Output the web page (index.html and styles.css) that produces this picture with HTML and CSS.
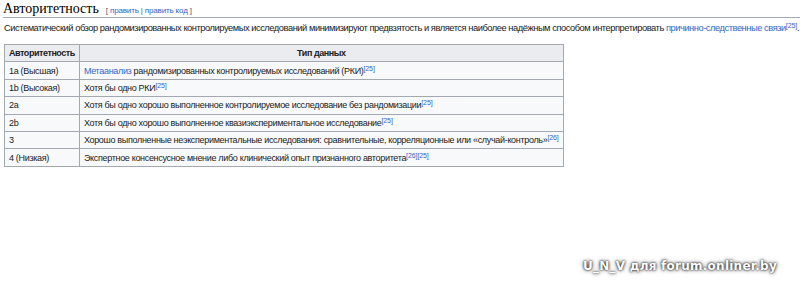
FILE: index.html
```html
<!DOCTYPE html>
<html lang="ru">
<head>
<meta charset="utf-8">
<link rel="stylesheet" href="styles.css">
</head>
<body>
<div class="page">
  <h2 class="heading"><span class="headline">Авторитетность</span><span class="edit"><span class="br">[</span> <a href="#">править</a> <span class="sep">|</span> <a href="#">править код</a> <span class="br">]</span></span></h2>
  <p class="para">Систематический обзор рандомизированных контролируемых исследований минимизируют предвзятость и является наиболее надёжным способом интерпретировать <a href="#">причинно-следственные связи</a><sup><a href="#">[25]</a></sup>.</p>
  <table class="wikitable">
    <thead>
      <tr><th class="c1">Авторитетность</th><th>Тип данных</th></tr>
    </thead>
    <tbody>
      <tr><td>1a (Высшая)</td><td><a href="#">Метаанализ</a> рандомизированных контролируемых исследований (РКИ)<sup><a href="#">[25]</a></sup></td></tr>
      <tr><td>1b (Высокая)</td><td>Хотя бы одно РКИ<sup><a href="#">[25]</a></sup></td></tr>
      <tr><td>2a</td><td>Хотя бы одно хорошо выполненное контролируемое исследование без рандомизации<sup><a href="#">[25]</a></sup></td></tr>
      <tr><td>2b</td><td>Хотя бы одно хорошо выполненное квазиэкспериментальное исследование<sup><a href="#">[25]</a></sup></td></tr>
      <tr><td>3</td><td>Хорошо выполненные неэкспериментальные исследования: сравнительные, корреляционные или «случай-контроль»<sup><a href="#">[26]</a></sup></td></tr>
      <tr><td>4 (Низкая)</td><td>Экспертное консенсусное мнение либо клинический опыт признанного авторитета<sup><a href="#">[26]</a><a href="#">[25]</a></sup></td></tr>
    </tbody>
  </table>
  <span class="watermark">U_N_V для forum.onliner.by</span>
</div>
</body>
</html>
```
FILE: styles.css
```css
html, body {
  margin: 0;
  padding: 0;
  background: #ffffff;
}
body {
  font-family: "Liberation Sans", Arial, sans-serif;
  color: #202122;
  width: 800px;
  height: 290px;
  overflow: hidden;
}
.page {
  position: relative;
  height: 290px;
  padding: 0 0 0 4px;
  box-sizing: border-box;
}
a {
  color: #3366cc;
  text-decoration: none;
}
.heading {
  margin: 0 0 0 -1px;
  padding: 1px 0 0 0;
  height: 16px;
  border-bottom: 1px solid #a2a9b1;
  font-weight: normal;
  font-family: "Liberation Serif", "Times New Roman", serif;
  font-size: 14px;
  line-height: 16px;
  display: flex;
  align-items: baseline;
  color: #000;
}
.edit {
  font-family: "Liberation Sans", Arial, sans-serif;
  font-size: 8px;
  letter-spacing: -0.15px;
  margin-left: 7px;
  color: #54595d;
}
.para {
  margin: 3px 0 0 0;
  font-size: 9.3px;
  letter-spacing: -0.45px;
  line-height: 14px;
  white-space: nowrap;
}
sup {
  font-size: 7px;
  line-height: 0;
  letter-spacing: -0.1px;
  vertical-align: 3px;
}
.wikitable {
  margin-top: 9px;
  border-collapse: collapse;
  background: #f8f9fa;
  border: 1px solid #a2a9b1;
  width: 558px;
  font-size: 9px;
  letter-spacing: -0.32px;
}
.wikitable th, .wikitable td {
  border: 1px solid #a2a9b1;
  padding: 0 4px;
  height: 16.4px;
  text-align: left;
  vertical-align: middle;
  white-space: nowrap;
}
.wikitable th {
  background: #eaecf0;
  text-align: center;
  font-weight: bold;
  letter-spacing: -0.45px;
}
.wikitable th.c1 {
  width: 66px;
  text-align: left;
}
.watermark {
  position: absolute;
  left: 583px;
  top: 259px;
  font-family: "DejaVu Sans", Verdana, sans-serif;
  font-weight: bold;
  font-size: 12px;
  letter-spacing: 0.25px;
  line-height: 14px;
  color: #ffffff;
  text-shadow: 0 0 2px #000, 0 0 4px rgba(0,0,0,0.8);
  white-space: nowrap;
}
```
